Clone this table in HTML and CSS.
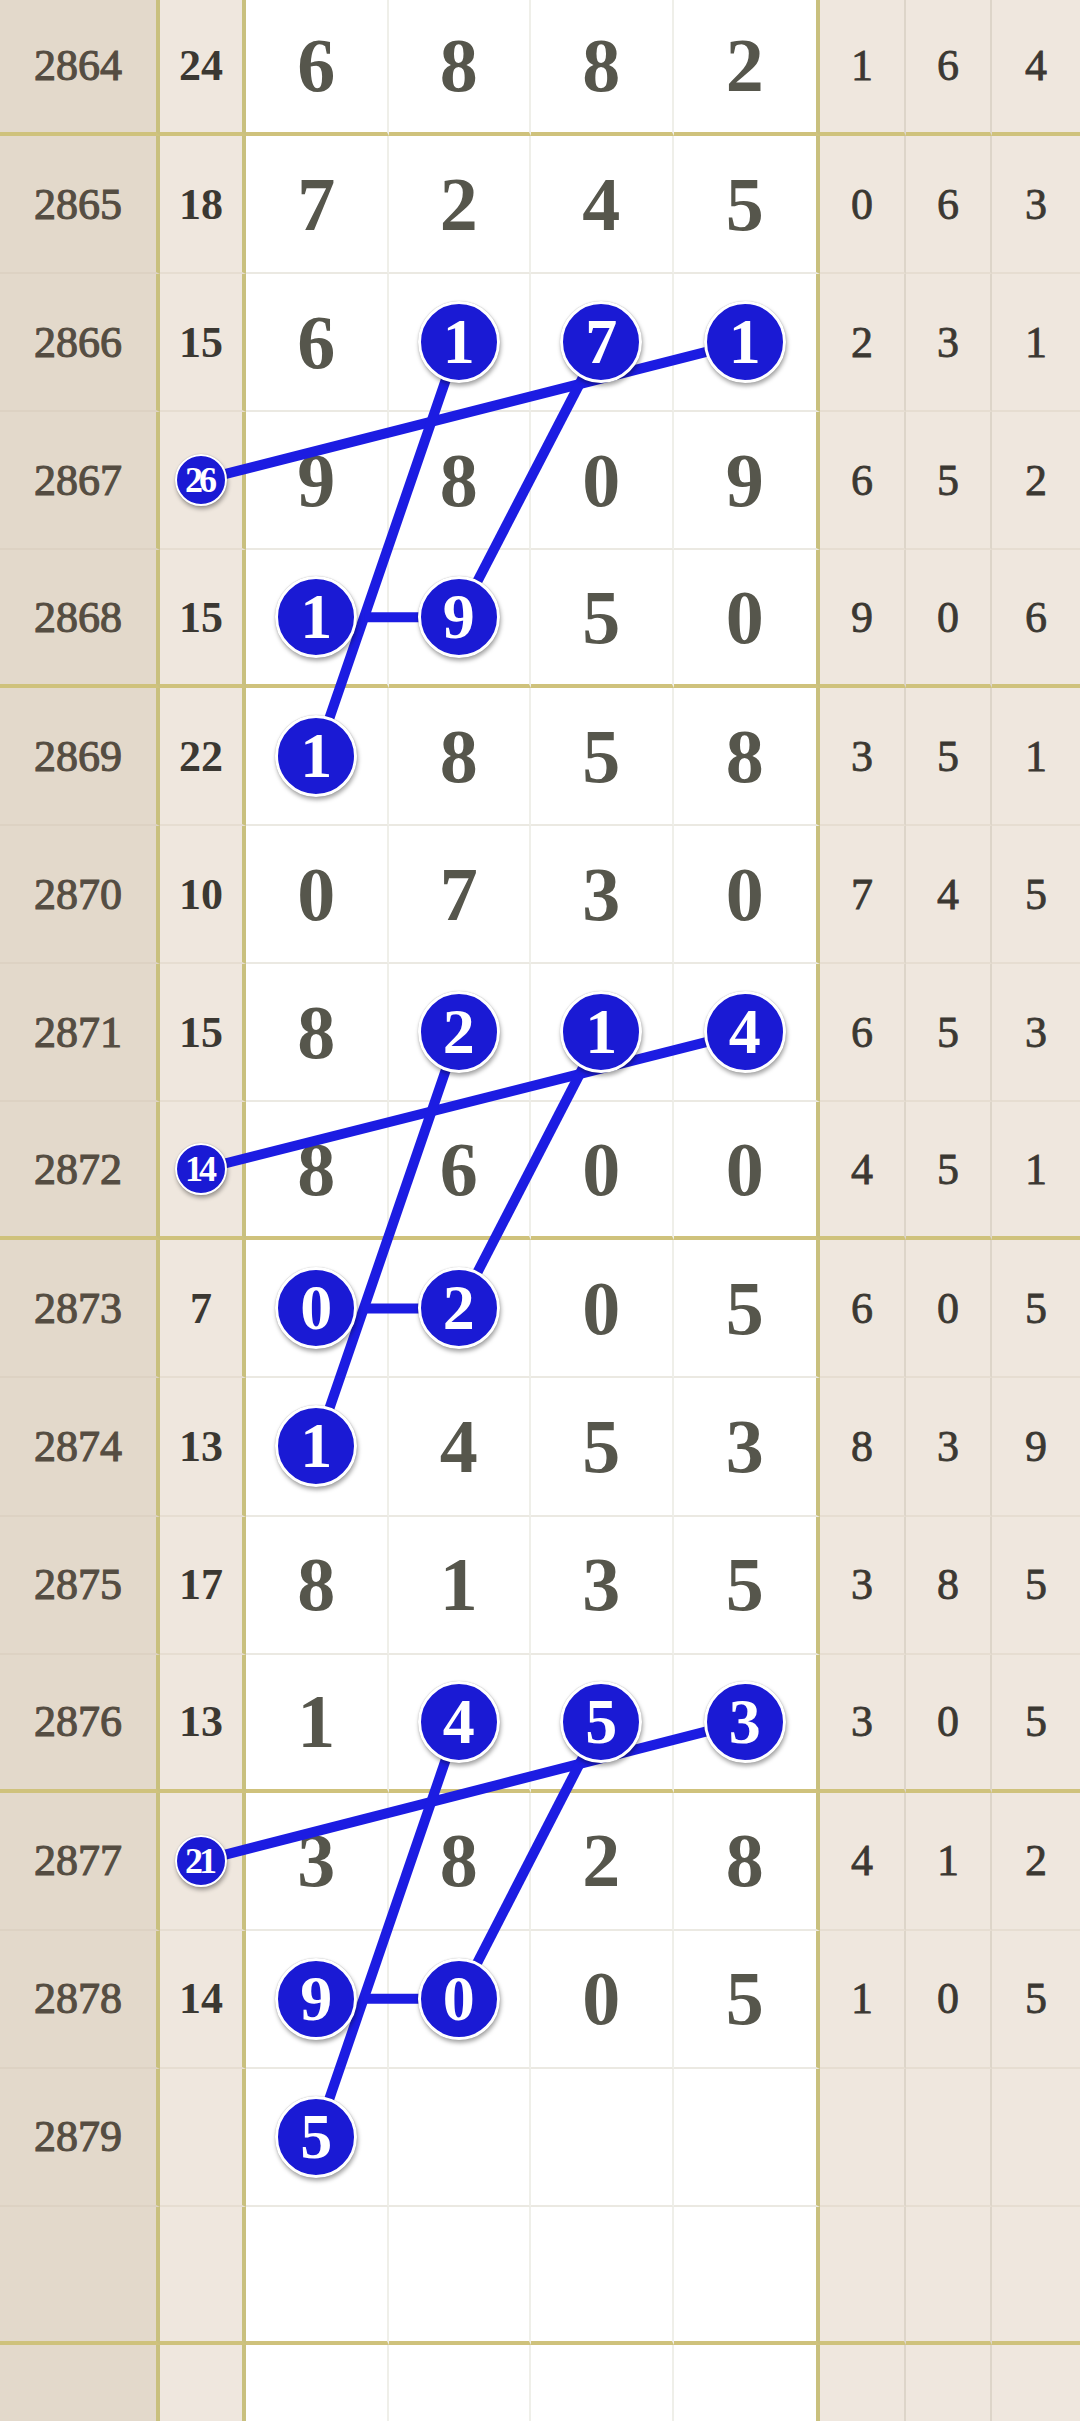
FILE: index.html
```html
<!DOCTYPE html>
<html lang="zh">
<head>
    <meta charset="UTF-8">
    <meta name="viewport" content="width=device-width, initial-scale=1.0">
    <title>走势图</title>
    <link rel="stylesheet" href="styles.css">
</head>
<body>
    <div class="chart">
        <div class="row major">
            <div class="c-no">2864</div><div class="c-sum">24</div>
            <div class="c-d">6</div><div class="c-d">8</div><div class="c-d">8</div><div class="c-d last">2</div>
            <div class="c-r">1</div><div class="c-r">6</div><div class="c-r end">4</div>
        </div>
        <div class="row">
            <div class="c-no">2865</div><div class="c-sum">18</div>
            <div class="c-d">7</div><div class="c-d">2</div><div class="c-d">4</div><div class="c-d last">5</div>
            <div class="c-r">0</div><div class="c-r">6</div><div class="c-r end">3</div>
        </div>
        <div class="row">
            <div class="c-no">2866</div><div class="c-sum">15</div>
            <div class="c-d">6</div><div class="c-d"><span class="ball">1</span></div><div class="c-d"><span class="ball">7</span></div><div class="c-d last"><span class="ball">1</span></div>
            <div class="c-r">2</div><div class="c-r">3</div><div class="c-r end">1</div>
        </div>
        <div class="row">
            <div class="c-no">2867</div><div class="c-sum"><span class="ball small">26</span></div>
            <div class="c-d">9</div><div class="c-d">8</div><div class="c-d">0</div><div class="c-d last">9</div>
            <div class="c-r">6</div><div class="c-r">5</div><div class="c-r end">2</div>
        </div>
        <div class="row major">
            <div class="c-no">2868</div><div class="c-sum">15</div>
            <div class="c-d"><span class="ball">1</span></div><div class="c-d"><span class="ball">9</span></div><div class="c-d">5</div><div class="c-d last">0</div>
            <div class="c-r">9</div><div class="c-r">0</div><div class="c-r end">6</div>
        </div>
        <div class="row">
            <div class="c-no">2869</div><div class="c-sum">22</div>
            <div class="c-d"><span class="ball">1</span></div><div class="c-d">8</div><div class="c-d">5</div><div class="c-d last">8</div>
            <div class="c-r">3</div><div class="c-r">5</div><div class="c-r end">1</div>
        </div>
        <div class="row">
            <div class="c-no">2870</div><div class="c-sum">10</div>
            <div class="c-d">0</div><div class="c-d">7</div><div class="c-d">3</div><div class="c-d last">0</div>
            <div class="c-r">7</div><div class="c-r">4</div><div class="c-r end">5</div>
        </div>
        <div class="row">
            <div class="c-no">2871</div><div class="c-sum">15</div>
            <div class="c-d">8</div><div class="c-d"><span class="ball">2</span></div><div class="c-d"><span class="ball">1</span></div><div class="c-d last"><span class="ball">4</span></div>
            <div class="c-r">6</div><div class="c-r">5</div><div class="c-r end">3</div>
        </div>
        <div class="row major">
            <div class="c-no">2872</div><div class="c-sum"><span class="ball small">14</span></div>
            <div class="c-d">8</div><div class="c-d">6</div><div class="c-d">0</div><div class="c-d last">0</div>
            <div class="c-r">4</div><div class="c-r">5</div><div class="c-r end">1</div>
        </div>
        <div class="row">
            <div class="c-no">2873</div><div class="c-sum">7</div>
            <div class="c-d"><span class="ball">0</span></div><div class="c-d"><span class="ball">2</span></div><div class="c-d">0</div><div class="c-d last">5</div>
            <div class="c-r">6</div><div class="c-r">0</div><div class="c-r end">5</div>
        </div>
        <div class="row">
            <div class="c-no">2874</div><div class="c-sum">13</div>
            <div class="c-d"><span class="ball">1</span></div><div class="c-d">4</div><div class="c-d">5</div><div class="c-d last">3</div>
            <div class="c-r">8</div><div class="c-r">3</div><div class="c-r end">9</div>
        </div>
        <div class="row">
            <div class="c-no">2875</div><div class="c-sum">17</div>
            <div class="c-d">8</div><div class="c-d">1</div><div class="c-d">3</div><div class="c-d last">5</div>
            <div class="c-r">3</div><div class="c-r">8</div><div class="c-r end">5</div>
        </div>
        <div class="row major">
            <div class="c-no">2876</div><div class="c-sum">13</div>
            <div class="c-d">1</div><div class="c-d"><span class="ball">4</span></div><div class="c-d"><span class="ball">5</span></div><div class="c-d last"><span class="ball">3</span></div>
            <div class="c-r">3</div><div class="c-r">0</div><div class="c-r end">5</div>
        </div>
        <div class="row">
            <div class="c-no">2877</div><div class="c-sum"><span class="ball small">21</span></div>
            <div class="c-d">3</div><div class="c-d">8</div><div class="c-d">2</div><div class="c-d last">8</div>
            <div class="c-r">4</div><div class="c-r">1</div><div class="c-r end">2</div>
        </div>
        <div class="row">
            <div class="c-no">2878</div><div class="c-sum">14</div>
            <div class="c-d"><span class="ball">9</span></div><div class="c-d"><span class="ball">0</span></div><div class="c-d">0</div><div class="c-d last">5</div>
            <div class="c-r">1</div><div class="c-r">0</div><div class="c-r end">5</div>
        </div>
        <div class="row">
            <div class="c-no">2879</div><div class="c-sum"></div>
            <div class="c-d"><span class="ball">5</span></div><div class="c-d"></div><div class="c-d"></div><div class="c-d last"></div>
            <div class="c-r"></div><div class="c-r"></div><div class="c-r end"></div>
        </div>
        <div class="row major">
            <div class="c-no"></div><div class="c-sum"></div>
            <div class="c-d"></div><div class="c-d"></div><div class="c-d"></div><div class="c-d last"></div>
            <div class="c-r"></div><div class="c-r"></div><div class="c-r end"></div>
        </div>
        <div class="row">
            <div class="c-no"></div><div class="c-sum"></div>
            <div class="c-d"></div><div class="c-d"></div><div class="c-d"></div><div class="c-d last"></div>
            <div class="c-r"></div><div class="c-r"></div><div class="c-r end"></div>
        </div>

        <!-- connecting lines, drawn between the digits and the balls -->
        <svg class="lines" width="1080" height="2421" viewBox="0 0 1080 2421">
            <g stroke="#1c1ce2" stroke-width="10" fill="none">
                <!-- 2866 - 2869 -->
                <line x1="201" y1="480.2" x2="744.75" y2="342.1"/>
                <line x1="458.75" y1="342.1" x2="316.25" y2="756.3"/>
                <line x1="601.25" y1="342.1" x2="458.75" y2="617.2"/>
                <line x1="364.1" y1="617.2" x2="458.75" y2="617.2"/>
                <!-- 2871 - 2874 -->
                <line x1="201" y1="1169.5" x2="744.75" y2="1032.4"/>
                <line x1="458.75" y1="1032.4" x2="316.25" y2="1446.6"/>
                <line x1="601.25" y1="1032.4" x2="458.75" y2="1308.5"/>
                <line x1="363.75" y1="1308.5" x2="458.75" y2="1308.5"/>
                <!-- 2876 - 2879 -->
                <line x1="201" y1="1860.8" x2="744.75" y2="1721.7"/>
                <line x1="458.75" y1="1721.7" x2="316.25" y2="2136.9"/>
                <line x1="601.25" y1="1721.7" x2="458.75" y2="1998.8"/>
                <line x1="363.65" y1="1998.8" x2="458.75" y2="1998.8"/>
            </g>
        </svg>
    </div>
</body>
</html>
```

FILE: styles.css
```css
html, body {
    margin: 0;
    padding: 0;
    background: #fff;
}
body {
    height: 2421px;
    overflow: hidden;
    font-family: "Liberation Serif", "Times New Roman", serif;
}
.chart {
    position: relative;
    margin-top: -2px;
}
.row {
    display: grid;
    grid-template-columns: 160px 86px 142.5px 142.5px 142.5px 146.5px 86px 86px 88px;
    height: 138.06px;
    box-sizing: border-box;
}
.row > div {
    box-sizing: border-box;
    display: flex;
    align-items: center;
    justify-content: center;
    border-bottom: 2px solid #ebe9e2;
}
.row.major > div {
    border-bottom: 4px solid #cfc27c;
}
.c-no {
    background: #e3d9cb;
    border-right: 4px solid #c9c07e;
    color: #554d42;
    font-size: 44px;
    -webkit-text-stroke: 1.1px #554d42;
}
.row > .c-no {
    border-bottom-color: #ddd2c3;
}
.c-sum {
    background: #efe7de;
    border-right: 4px solid #c9c07e;
    color: #3b3832;
    font-size: 44px;
    font-weight: bold;
}
.row > .c-sum,
.row > .c-r {
    border-bottom-color: #e6ddd1;
}
.c-d {
    background: #fff;
    border-right: 2px solid #efefe9;
    color: #56564c;
    font-size: 76px;
    font-weight: bold;
}
.c-d.last {
    border-right: 4px solid #c9c07e;
}
.c-r {
    background: #efe7de;
    border-right: 2px solid #ddd5c9;
    color: #3b3832;
    font-size: 44px;
    -webkit-text-stroke: 0.8px #3b3832;
}
.c-r.end {
    border-right: none;
}
.ball {
    position: relative;
    z-index: 2;
    width: 82px;
    height: 82px;
    flex: none;
    box-sizing: border-box;
    border-radius: 50%;
    background: #1a1ad4;
    border: 3px solid #fff;
    box-shadow: 1px 3px 4px rgba(0, 0, 0, 0.35), 0 0 1px rgba(0, 0, 0, 0.3);
    color: #fff;
    font-size: 64px;
    font-weight: bold;
    -webkit-text-stroke: 0;
    display: flex;
    align-items: center;
    justify-content: center;
}
.ball.small {
    width: 52px;
    height: 52px;
    border-width: 2px;
    font-size: 36px;
    letter-spacing: -4px;
    text-indent: -4px;
}
.lines {
    position: absolute;
    top: 2px;
    left: 0;
    z-index: 1;
    pointer-events: none;
}
```
